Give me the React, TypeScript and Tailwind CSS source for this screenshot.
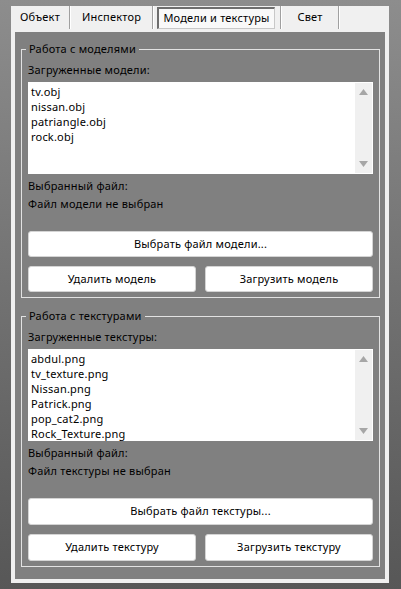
import React from 'react';

const models = ['tv.obj', 'nissan.obj', 'patriangle.obj', 'rock.obj'];
const textures = ['abdul.png', 'tv_texture.png', 'Nissan.png', 'Patrick.png', 'pop_cat2.png', 'Rock_Texture.png'];

function Separator() {
  return (
    <div className="flex h-[23px]">
      <div className="w-px bg-[#a0a0a0]" />
      <div className="w-px bg-white" />
    </div>
  );
}

function ListBox({ items }: { items: string[] }) {
  return (
    <div className="mt-[4px] h-[92px] bg-white flex">
      <div className="flex-1 pt-[2px] pl-[3px] leading-[15px]">
        {items.map((item) => (
          <div key={item}>{item}</div>
        ))}
      </div>
      {/* scrollbar */}
      <div className="w-[17px] my-px mr-px bg-[#f0f0f0] flex flex-col items-center justify-between pt-[6px] pb-[6px]">
        <svg width="9" height="6" viewBox="0 0 9 6">
          <path d="M4.5 0 L9 6 L0 6 Z" fill="#a6a6a6" />
        </svg>
        <svg width="9" height="6" viewBox="0 0 9 6">
          <path d="M0 0 L9 0 L4.5 6 Z" fill="#a6a6a6" />
        </svg>
      </div>
    </div>
  );
}

function Button({ children, tall }: { children: React.ReactNode; tall?: boolean }) {
  return (
    <div
      className={`${tall ? 'h-[27px]' : 'h-[26px]'} flex-1 bg-white rounded-[3px] border border-[#d4d4d4] flex items-center justify-center`}
    >
      {children}
    </div>
  );
}

function Group(props: {
  title: string;
  listLabel: string;
  items: string[];
  emptyText: string;
  pickText: string;
  removeText: string;
  loadText: string;
  tall?: boolean;
  className?: string;
}) {
  return (
    <fieldset className={`border border-[#e2e2e2] px-[6px] pb-[5px] ${props.className || ''}`}>
      <legend className="ml-[-2px] px-[3px] leading-[16px]">{props.title}</legend>
      <div className="mt-[5px] leading-[16px]">{props.listLabel}</div>
      <ListBox items={props.items} />
      <div className="mt-[4px] leading-[16px]">Выбранный файл:</div>
      <div className="mt-[2px] leading-[16px]">{props.emptyText}</div>
      <div className="mt-[19px] flex">
        <Button tall={props.tall}>{props.pickText}</Button>
      </div>
      <div className="mt-[9px] flex gap-[9px]">
        <Button tall={props.tall}>{props.removeText}</Button>
        <Button tall={props.tall}>{props.loadText}</Button>
      </div>
    </fieldset>
  );
}

export default function App() {
  return (
    <div className="w-[401px] h-[589px] bg-gradient-to-b from-[#8d8d8d] to-[#575757] pt-[6px] pl-[11px] text-[11px] tracking-[0.2px] text-black font-['Noto_Sans',sans-serif]">
      <div className="w-[378px] h-[577px] bg-[#f0f0f0] flex flex-col">
        {/* Tabs */}
        <div className="h-[26px] flex items-start">
          <div className="w-[58px] h-[23px] flex items-center justify-center">Объект</div>
          <Separator />
          <div className="w-[81px] h-[23px] flex items-center justify-center">Инспектор</div>
          <Separator />
          <div className="w-[3px]" />
          <div className="w-[118px] h-[22px] mt-px bg-[#f9f9f9] border-t-2 border-l-2 border-[#6e6e6e] border-r border-b border-r-[#c8c8c8] border-b-[#c8c8c8] flex items-center justify-center">
            Модели и текстуры
          </div>
          <div className="w-[5px]" />
          <Separator />
          <div className="w-[56px] h-[23px] flex items-center justify-center">Свет</div>
          <Separator />
        </div>

        {/* Panel */}
        <div className="flex-1 mx-[4px] mb-[4px] bg-[#808080] pl-[6px] pr-[5px] pt-[9px]">
          <Group
            title="Работа с моделями"
            listLabel="Загруженные модели:"
            items={models}
            emptyText="Файл модели не выбран"
            pickText="Выбрать файл модели..."
            removeText="Удалить модель"
            loadText="Загрузить модель"
          />
          <Group
            className="mt-[10px]"
            tall
            title="Работа с текстурами"
            listLabel="Загруженные текстуры:"
            items={textures}
            emptyText="Файл текстуры не выбран"
            pickText="Выбрать файл текстуры..."
            removeText="Удалить текстуру"
            loadText="Загрузить текстуру"
          />
        </div>
      </div>
    </div>
  );
}
